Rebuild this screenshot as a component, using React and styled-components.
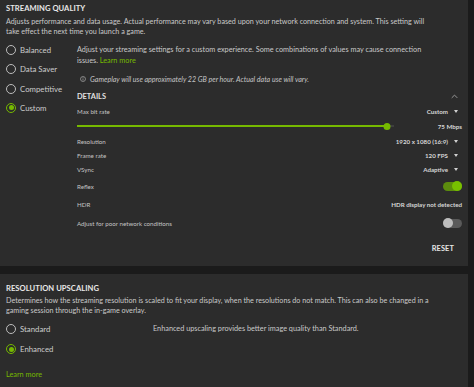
import React, { useState } from 'react';
import styled, { createGlobalStyle } from 'styled-components';

const Global = createGlobalStyle`
  html, body { margin: 0; padding: 0; background: #1b1b1b; }
  body { font-family: "Lato", "Liberation Sans", sans-serif; color: #cfcfcf; }
  * { box-sizing: border-box; }
`;

const Page = styled.div`
  width: 474px;
  height: 387px;
  padding-right: 6px;
  background: #1b1b1b;
  overflow: hidden;
`;

const Panel = styled.section`
  background: #2c2c2c;
  height: ${p => p.$h}px;
  padding: ${p => p.$top}px 6px 0 6px;
  margin-bottom: 8px;
`;

const Title = styled.h2`
  margin: 0;
  font-size: 7.6px;
  line-height: 10px;
  font-weight: 700;
  color: #e8e8e8;
  letter-spacing: 0.05px;
`;

const Desc = styled.p`
  margin: ${p => p.$mt || 4}px 0 0;
  font-size: 7.2px;
  line-height: 10px;
  color: #c9c9c9;
`;

const Row = styled.div`
  display: flex;
  margin-top: ${p => p.$mt}px;
`;

const RadioCol = styled.div`
  width: ${p => p.$w}px;
  flex: none;
  display: flex;
  flex-direction: column;
  gap: ${p => p.$gap}px;
`;

const RadioItem = styled.label`
  display: flex;
  align-items: center;
  gap: 4px;
  height: 12px;
  font-size: 7.8px;
  color: #cdcdcd;
  cursor: pointer;
`;

const Ring = styled.span`
  width: 10px;
  height: 10px;
  border-radius: 50%;
  border: 1.3px solid ${p => (p.$on ? '#76b900' : '#bdbdbd')};
  display: flex;
  align-items: center;
  justify-content: center;
  flex: none;
  &::after {
    content: '';
    width: 5px;
    height: 5px;
    border-radius: 50%;
    background: ${p => (p.$on ? '#76b900' : 'transparent')};
  }
`;

const Main = styled.div`
  flex: 1;
  display: flex;
  flex-direction: column;
`;

const Text = styled.p`
  margin: 0;
  font-size: 7.3px;
  line-height: 11px;
  color: #c9c9c9;
`;

const Link = styled.a`
  color: #76b900;
  text-decoration: none;
`;

const Note = styled.div`
  margin-top: 7px;
  height: 12px;
  display: flex;
  align-items: center;
  gap: 4px;
  padding-left: 3px;
  font-size: 7.1px;
  font-style: italic;
  color: #c4c4c4;
`;

const DetailsHead = styled.div`
  margin-top: 5px;
  height: 12px;
  display: flex;
  align-items: center;
  justify-content: space-between;
  padding-right: 4px;
`;

const SubTitle = styled.span`
  font-size: 7.4px;
  font-weight: 700;
  color: #e0e0e0;
`;

const Setting = styled.div`
  height: ${p => p.$h}px;
  margin-top: ${p => p.$mt || 0}px;
  display: flex;
  align-items: center;
  justify-content: space-between;
  font-size: 6.2px;
  color: #c4c4c4;
`;

const Value = styled.span`
  display: flex;
  align-items: center;
  gap: 6px;
  font-weight: 700;
  color: #d6d6d6;
  padding-right: ${p => p.$pr || 0}px;
`;

const Caret = styled.span`
  width: 0;
  height: 0;
  border-left: 2.5px solid transparent;
  border-right: 2.5px solid transparent;
  border-top: 3px solid #cfcfcf;
`;

const Track = styled.div`
  flex: 1;
  margin-right: 44px;
  height: 2px;
  background: #3f3f3f;
  position: relative;
`;

const Fill = styled.div`
  height: 100%;
  background: #76b900;
`;

const Thumb = styled.span`
  position: absolute;
  top: -2.5px;
  width: 7px;
  height: 7px;
  border-radius: 50%;
  background: #76b900;
  transform: translateX(-3.5px);
`;

const Toggle = styled.span`
  width: 19px;
  height: 9px;
  border-radius: 5px;
  background: ${p => (p.$on ? '#5c8c0e' : '#5a5a5a')};
  position: relative;
  &::after {
    content: '';
    position: absolute;
    top: -1px;
    left: ${p => (p.$on ? '9px' : '0')};
    width: 10px;
    height: 10px;
    border-radius: 50%;
    background: ${p => (p.$on ? '#78c000' : '#bdbdbd')};
  }
`;

const ResetRow = styled.div`
  margin-top: 8px;
  height: 14px;
  display: flex;
  justify-content: flex-end;
  align-items: center;
  padding-right: 8px;
`;

const Reset = styled.button`
  background: none;
  border: none;
  padding: 0;
  font-family: inherit;
  font-size: 7.4px;
  font-weight: 700;
  color: #e6e6e6;
  letter-spacing: 0.1px;
`;

const Side = styled.span`
  font-size: 7.3px;
  color: #c9c9c9;
  line-height: 12px;
`;

const LearnMore = styled.a`
  display: block;
  margin-top: 14px;
  font-size: 7.3px;
  line-height: 12px;
  color: #76b900;
  text-decoration: none;
`;

const InfoIcon = () => (
  <svg width="6" height="6" viewBox="0 0 12 12">
    <circle cx="6" cy="6" r="5" fill="none" stroke="#a8a8a8" strokeWidth="1.4" />
    <rect x="5.3" y="5" width="1.4" height="4" fill="#a8a8a8" />
    <rect x="5.3" y="2.8" width="1.4" height="1.4" fill="#a8a8a8" />
  </svg>
);

const ChevronUp = () => (
  <svg width="7" height="5" viewBox="0 0 10 6">
    <path d="M1 5 L5 1 L9 5" fill="none" stroke="#9a9a9a" strokeWidth="1.4" />
  </svg>
);

const presets = ['Balanced', 'Data Saver', 'Competitive', 'Custom'];

export default function App() {
  const [preset, setPreset] = useState('Custom');
  const [upscale, setUpscale] = useState('Enhanced');
  const bitrate = 0.98;

  return (
    <Page>
      <Global />
      <Panel $h={266} $top={3}>
        <Title>STREAMING QUALITY</Title>
        <Desc>
          Adjusts performance and data usage. Actual performance may vary based upon your network connection and system. This setting will
          <br />
          take effect the next time you launch a game.
        </Desc>
        <Row $mt={7}>
          <RadioCol $w={71} $gap={7.3}>
            {presets.map(p => (
              <RadioItem key={p} onClick={() => setPreset(p)}>
                <Ring $on={preset === p} />
                {p}
              </RadioItem>
            ))}
          </RadioCol>
          <Main>
            <Text>
              Adjust your streaming settings for a custom experience. Some combinations of values may cause connection
              <br />
              issues. <Link href="#">Learn more</Link>
            </Text>
            <Note>
              <InfoIcon />
              Gameplay will use approximately 22 GB per hour. Actual data use will vary.
            </Note>
            <DetailsHead>
              <SubTitle>DETAILS</SubTitle>
              <ChevronUp />
            </DetailsHead>
            <Setting $h={14} $mt={2}>
              <span>Max bit rate</span>
              <Value $pr={4}>Custom <Caret /></Value>
            </Setting>
            <Setting $h={16}>
              <Track>
                <Fill style={{ width: `${bitrate * 100}%` }} />
                <Thumb style={{ left: `${bitrate * 100}%` }} />
              </Track>
              <Value>75 Mbps</Value>
            </Setting>
            <Setting $h={14}>
              <span>Resolution</span>
              <Value $pr={4}>1920 x 1080 (16:9) <Caret /></Value>
            </Setting>
            <Setting $h={14}>
              <span>Frame rate</span>
              <Value $pr={4}>120 FPS <Caret /></Value>
            </Setting>
            <Setting $h={14}>
              <span>VSync</span>
              <Value $pr={4}>Adaptive <Caret /></Value>
            </Setting>
            <Setting $h={20}>
              <span>Reflex</span>
              <Toggle $on />
            </Setting>
            <Setting $h={17}>
              <span>HDR</span>
              <Value>HDR display not detected</Value>
            </Setting>
            <Setting $h={20}>
              <span>Adjust for poor network conditions</span>
              <Toggle />
            </Setting>
            <ResetRow>
              <Reset>RESET</Reset>
            </ResetRow>
          </Main>
        </Row>
      </Panel>
      <Panel $h={113} $top={9}>
        <Title>RESOLUTION UPSCALING</Title>
        <Desc $mt={3}>
          Determines how the streaming resolution is scaled to fit your display, when the resolutions do not match. This can also be changed in a
          <br />
          gaming session through the in-game overlay.
        </Desc>
        <Row $mt={7}>
          <RadioCol $w={147} $gap={8}>
            {['Standard', 'Enhanced'].map(p => (
              <RadioItem key={p} onClick={() => setUpscale(p)}>
                <Ring $on={upscale === p} />
                {p}
              </RadioItem>
            ))}
          </RadioCol>
          <Side>Enhanced upscaling provides better image quality than Standard.</Side>
        </Row>
        <LearnMore href="#">Learn more</LearnMore>
      </Panel>
    </Page>
  );
}
